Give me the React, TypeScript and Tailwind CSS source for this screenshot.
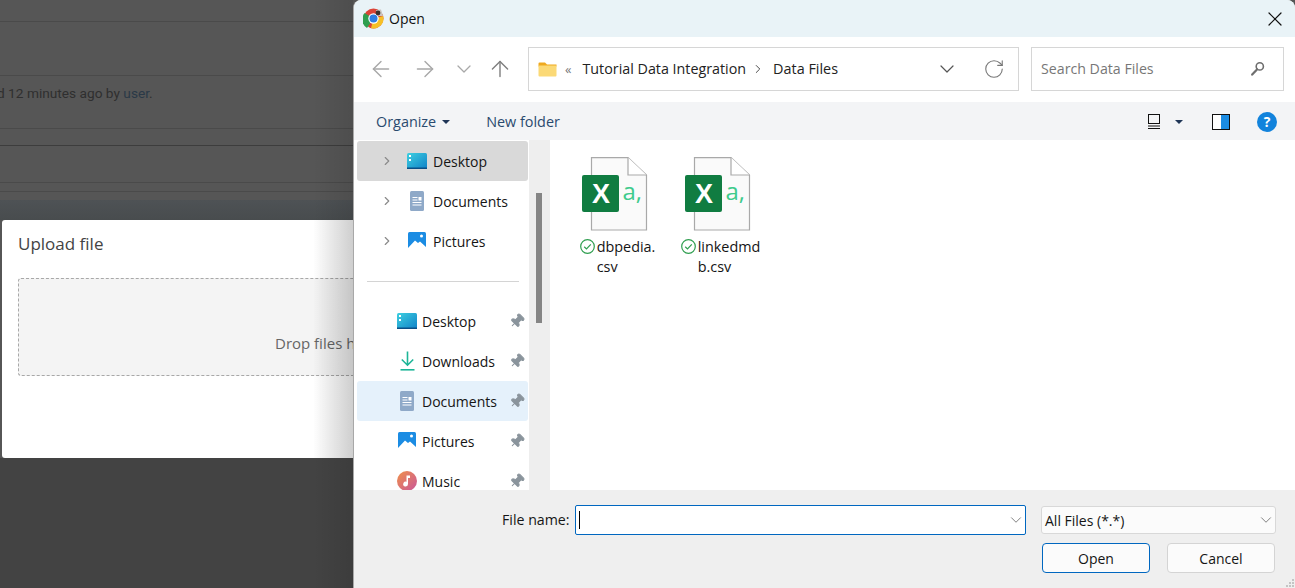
import { ArrowLeft, ArrowRight, ArrowUp, ChevronDown, ChevronRight, RotateCw, X, Pin } from 'lucide-react';

const SEGOE = "font-['Open_Sans','Noto_Sans',sans-serif]";

function ChromeIcon() {
  return (
    <svg width="21" height="21" viewBox="0 0 21 21">
      <circle cx="10.5" cy="10.5" r="10" fill="#db4437" />
      <path d="M10.5 10.5 L4 20 A10 10 0 0 1 1.6 5 Z" fill="#2f9e4f" />
      <path d="M10.5 10.5 L20.2 8 A10 10 0 0 1 8 20.2 Z" fill="#f6c026" />
      <circle cx="10.5" cy="10.5" r="5.2" fill="#fff" />
      <circle cx="10.5" cy="10.5" r="4" fill="#2f7de1" />
      <path d="M13 2 L18 1.5 L20 8 L15 8 Z" fill="#c9c4bd" />
      <circle cx="15" cy="5" r="2.4" fill="#3b302b" />
    </svg>
  );
}

function FolderIcon() {
  return (
    <svg width="19" height="16" viewBox="0 0 19 16">
      <path d="M0.5 2.5 A1 1 0 0 1 1.5 1.5 H7 L9 3.5 H18.5 V5.5 H0.5 Z" fill="#efa91f" />
      <rect x="0.5" y="4.5" width="18" height="11" rx="1" fill="#fbd976" />
    </svg>
  );
}

function DesktopIcon() {
  return (
    <svg width="20" height="16" viewBox="0 0 20 16">
      <defs>
        <linearGradient id="desk" x1="0" y1="0" x2="1" y2="1">
          <stop offset="0" stopColor="#3fd0e0" />
          <stop offset="1" stopColor="#0f82c8" />
        </linearGradient>
      </defs>
      <rect x="0" y="0" width="20" height="16" rx="1.5" fill="url(#desk)" />
      <rect x="0" y="14.5" width="20" height="1.5" fill="#0a4f86" />
      <rect x="2" y="2" width="2" height="2" fill="#fff" />
      <rect x="2" y="6" width="2" height="2" fill="#fff" />
    </svg>
  );
}

function DocumentsIcon() {
  return (
    <svg width="14" height="20" viewBox="0 0 14 20">
      <rect x="0" y="0" width="14" height="20" rx="1.5" fill="#8fa9c8" />
      <rect x="2.5" y="6" width="5" height="1" fill="#fff" />
      <rect x="2.5" y="8.5" width="5" height="1" fill="#fff" />
      <rect x="8.5" y="6" width="3" height="3.5" fill="#fff" />
      <rect x="2.5" y="11" width="9" height="1" fill="#fff" />
      <rect x="2.5" y="13.5" width="9" height="1" fill="#fff" />
    </svg>
  );
}

function PicturesIcon() {
  return (
    <svg width="18" height="18" viewBox="0 0 18 18">
      <rect x="0" y="0" width="18" height="18" rx="1.5" fill="#1b8ce3" />
      <path d="M0 16 L7 8.5 L10 11 L12 9.5 L18 15 V18 H0 Z" fill="#fff" />
      <circle cx="13.5" cy="4" r="1.5" fill="#fff" />
    </svg>
  );
}

function DownloadsIcon() {
  return (
    <svg width="15" height="20" viewBox="0 0 15 20" fill="none" stroke="#1db597" strokeWidth="1.6">
      <path d="M7.5 0.5 V14 M1.8 8.5 L7.5 14.2 L13.2 8.5" />
      <path d="M0.5 18.8 H14.5" />
    </svg>
  );
}

function MusicIcon() {
  return (
    <svg width="20" height="20" viewBox="0 0 20 20">
      <defs>
        <linearGradient id="mus" x1="0" y1="0" x2="1" y2="1">
          <stop offset="0" stopColor="#f0914a" />
          <stop offset="1" stopColor="#c9569a" />
        </linearGradient>
      </defs>
      <circle cx="10" cy="10" r="10" fill="url(#mus)" />
      <path d="M9.5 4.5 H13 V7 H11 V13 A2.4 2.4 0 1 1 9.5 10.8 Z" fill="#fff" />
    </svg>
  );
}

function SearchGlyph() {
  return (
    <svg width="14" height="16" viewBox="0 0 14 16" fill="none" stroke="#6e6e6e">
      <circle cx="8.8" cy="5.4" r="3.6" strokeWidth="1.6" />
      <path d="M6 8.4 L1.2 13.6" strokeWidth="2.2" strokeLinecap="round" />
    </svg>
  );
}

function PinIcon() {
  return <Pin className="w-4 h-4 rotate-45 text-[#8a949c] fill-[#8a949c]" strokeWidth={1.5} />;
}

function NavRow({ icon, label, selected }: { icon: React.ReactNode; label: string; selected?: boolean }) {
  return (
    <div className={`flex items-center flex-shrink-0 w-[171px] h-10 ml-[3px] rounded-[3px] ${selected ? 'bg-[#d9d9d9]' : ''}`}>
      <ChevronRight className="w-[14px] h-[14px] ml-[23px] text-[#8a8a8a]" strokeWidth={2} />
      <div className="w-5 ml-[13px] flex justify-center">{icon}</div>
      <span className="ml-[6px] text-[14px] text-[#151515]">{label}</span>
    </div>
  );
}

function QuickRow({ icon, label, selected }: { icon: React.ReactNode; label: string; selected?: boolean }) {
  return (
    <div className={`flex items-center flex-shrink-0 w-[171px] h-10 ml-[3px] rounded-[3px] ${selected ? 'bg-[#e5f1fb]' : ''}`}>
      <div className="w-5 ml-[40px] flex justify-center">{icon}</div>
      <span className="ml-[5px] text-[14px] text-[#151515] flex-1">{label}</span>
      <div className="mr-[3px]"><PinIcon /></div>
    </div>
  );
}

function CsvIcon() {
  return (
    <svg width="68" height="76" viewBox="0 0 68 76" className="ml-[16px] flex-shrink-0">
      <path d="M9.5 0.6 H46 L64.5 18 V73 H9.5 Z" fill="#fafafa" stroke="#a9a9a9" strokeWidth="1.2" />
      <path d="M46 0.6 V18 H64.5" fill="#fff" stroke="#a9a9a9" strokeWidth="1.2" />
      <rect x="0" y="18" width="37" height="37" rx="2" fill="#107c41" />
      <text x="19" y="46" textAnchor="middle" fontFamily="Liberation Sans, sans-serif" fontWeight="700" fontSize="27" fill="#fff">X</text>
      <text x="40.5" y="43" fontFamily="Open Sans, sans-serif" fontSize="24" fill="#3ecb8d">a,</text>
    </svg>
  );
}

function CheckBadge() {
  return (
    <svg width="15" height="15" viewBox="0 0 15 15" fill="none" stroke="#2f9e4f" className="flex-shrink-0 mt-[2px]">
      <circle cx="7.5" cy="7.5" r="6.8" strokeWidth="1.2" />
      <path d="M4.2 7.7 L6.5 9.9 L10.8 5.4" strokeWidth="1.2" />
    </svg>
  );
}

function FileItem({ lines }: { lines: string[] }) {
  return (
    <div className="w-[103px] flex flex-col">
      <CsvIcon />
      <div className="flex justify-center mt-[4px] gap-[2px]">
        <CheckBadge />
        <div className="text-[14.4px] leading-5 text-[#151515]">
          {lines.map((l) => <div key={l}>{l}</div>)}
        </div>
      </div>
    </div>
  );
}

function BackgroundPage() {
  return (
    <div className="w-[353px] h-[588px] flex-shrink-0 relative overflow-hidden bg-[#565656] flex flex-col font-['Roboto',sans-serif]">
      <div className="h-[22px] border-b border-[#4a4a4a]" />
      <div className="h-[54px] border-b border-[#4a4a4a]" />
      <div className="h-[53px] pb-[18px] border-b border-[#4a4a4a] flex items-center whitespace-nowrap text-[13.7px] text-[#2f2f2f] -ml-[3px]">
        <span>d 12 minutes ago by <span className="text-[#2a3947]">user</span>.</span>
      </div>
      <div className="h-[17px] border-b border-[#3d3d3d]" />
      <div className="h-[37px] border-b border-[#4a4a4a]" />
      <div className="h-[9px] border-b border-[#4a4a4a]" />
      <div className="h-[8px]" />
      <div className="h-[20px] bg-gradient-to-b from-[#4e5255] to-[#484c4e]" />
      <div className="h-[238px] flex-shrink-0 ml-[2px] bg-white rounded-l-[3px] relative flex flex-col pl-4 font-['Open_Sans',sans-serif]">
        <div className="h-[58px] pb-[10px] flex items-center text-[17px] text-[#444444]">Upload file</div>
        <div className="h-[98px] border border-dashed border-[#a8a8a8] border-r-0 rounded-l-[3px] bg-[#f4f4f4] flex items-end pl-[256px] pb-[21px] text-[15px] text-[#666666] whitespace-nowrap overflow-hidden">
          <span>Drop files here to upload</span>
        </div>
        <div className="absolute inset-y-0 right-0 w-[40px] bg-gradient-to-r from-black/0 to-black/10" />
      </div>
      <div className="flex-1 bg-[#434343]" />
      <div className="absolute inset-y-0 right-0 w-[40px] bg-gradient-to-r from-black/0 to-black/10 pointer-events-none" />
    </div>
  );
}

export default function App() {
  return (
    <div className={`w-[1295px] h-[588px] flex overflow-hidden bg-[#555555] ${SEGOE}`}>
      <BackgroundPage />
      <div className="w-[942px] h-[588px] flex flex-col rounded-t-lg overflow-hidden bg-white border-l border-[#a8a8a8]">
        {/* title bar */}
        <div className="h-[37px] flex-shrink-0 flex items-center bg-[#e9f3f7] pl-[9px] pr-[8px]">
          <ChromeIcon />
          <span className="ml-[5px] text-[14px] text-[#111]">Open</span>
          <X className="ml-auto w-6 h-6 text-[#111]" strokeWidth={1.2} />
        </div>
        {/* nav bar */}
        <div className="h-[65px] pb-px flex-shrink-0 flex items-center bg-white">
          <ArrowLeft className="ml-[14px] w-[26px] h-[26px] text-[#a8a8a8]" strokeWidth={1.3} />
          <ArrowRight className="ml-[18px] w-[26px] h-[26px] text-[#a8a8a8]" strokeWidth={1.3} />
          <ChevronDown className="ml-[14px] w-6 h-6 text-[#a8a8a8]" strokeWidth={1.3} />
          <ArrowUp className="ml-[11px] w-[26px] h-[26px] text-[#7f7f7f]" strokeWidth={1.3} />
          <div className="ml-[15px] w-[491px] h-[44px] border border-[#d6d6d6] flex items-center">
            <div className="ml-[9px]"><FolderIcon /></div>
            <span className="ml-[8px] text-[13px] text-[#777] leading-none">«</span>
            <span className="ml-[11px] text-[14.3px] text-[#222]">Tutorial Data Integration</span>
            <ChevronRight className="ml-[5px] w-[14px] h-[14px] text-[#333]" strokeWidth={1.5} />
            <span className="ml-[8px] text-[14.4px] text-[#222]">Data Files</span>
            <ChevronDown className="ml-auto w-6 h-6 text-[#555]" strokeWidth={1.2} />
            <RotateCw className="ml-[24px] mr-[13px] w-[22px] h-[22px] text-[#777]" strokeWidth={1.2} />
          </div>
          <div className="ml-[12px] w-[253px] h-[44px] border border-[#d6d6d6] flex items-center pl-[9px] pr-[18px]">
            <span className="text-[14.2px] text-[#777]">Search Data Files</span>
            <div className="ml-auto"><SearchGlyph /></div>
          </div>
        </div>
        {/* command bar */}
        <div className="h-[38px] pt-px flex-shrink-0 flex items-center bg-[#f3f4f6] text-[14.4px] text-[#2a4a6e]">
          <span className="ml-[22px]">Organize</span>
          <span className="ml-[6px] border-x-[4px] border-t-[4px] border-x-transparent border-t-[#1f3556]" />
          <span className="ml-[36px]">New folder</span>
          <div className="ml-auto flex items-center">
            <svg width="16" height="18" viewBox="0 0 16 18" fill="none" stroke="#111">
              <rect x="2.5" y="1.5" width="11" height="9" />
              <path d="M2 13 H14 M2 15.5 H14" />
            </svg>
            <span className="ml-[13px] border-x-[4px] border-t-[4px] border-x-transparent border-t-[#1f3556]" />
            <div className="ml-[29px] w-[18px] h-[16px] border border-[#111] bg-gradient-to-r from-white from-50% to-[#1b8ce3] to-50%" />
            <div className="ml-[27px] mr-[18px] w-5 h-5 rounded-full bg-[#1283dc] flex items-center justify-center text-white text-[14px] font-bold leading-none">?</div>
          </div>
        </div>
        {/* body */}
        <div className="h-[350px] flex-shrink-0 flex overflow-hidden">
          <div className="w-[175px] flex-shrink-0 flex flex-col pt-px overflow-hidden">
            <NavRow icon={<DesktopIcon />} label="Desktop" selected />
            <NavRow icon={<DocumentsIcon />} label="Documents" />
            <NavRow icon={<PicturesIcon />} label="Pictures" />
            <div className="mt-5 mb-[19px] ml-[13px] mr-[10px] h-px flex-shrink-0 bg-[#d4d4d4]" />
            <QuickRow icon={<DesktopIcon />} label="Desktop" />
            <QuickRow icon={<DownloadsIcon />} label="Downloads" />
            <QuickRow icon={<DocumentsIcon />} label="Documents" selected />
            <QuickRow icon={<PicturesIcon />} label="Pictures" />
            <QuickRow icon={<MusicIcon />} label="Music" />
          </div>
          <div className="w-[21px] flex-shrink-0 bg-[#eeeeee] pt-[53px] pl-[7px]">
            <div className="w-[6px] h-[130px] bg-[#858585]" />
          </div>
          <div className="flex-1 flex items-start pt-[17px] pl-[16px] bg-white">
            <FileItem lines={['dbpedia.', 'csv']} />
            <FileItem lines={['linkedmd', 'b.csv']} />
          </div>
        </div>
        {/* footer */}
        <div className="flex-1 relative bg-[#efefef] pt-[15px] pl-[148px]">
          <div className="flex items-center">
            <span className="text-[14.2px] text-[#151515] w-[73px] whitespace-nowrap">File name:</span>
            <div className="w-[451px] h-[30px] border border-[#0067c0] rounded-[2px] bg-white flex items-center pl-[3px]">
              <span className="w-px h-[18px] bg-black" />
              <ChevronDown className="ml-auto w-[18px] h-[18px] text-[#666]" strokeWidth={1.1} />
            </div>
            <div className="ml-[15px] w-[235px] h-[28px] border border-[#d8d8d8] rounded-[3px] bg-[#fbfbfb] flex items-center pl-[3px]">
              <span className="text-[14px] text-[#151515]">All Files (*.*)</span>
              <ChevronDown className="ml-auto w-[18px] h-[18px] text-[#666]" strokeWidth={1.1} />
            </div>
          </div>
          <div className="flex mt-[8px] pl-[540px]">
            <div className="w-[108px] h-[30px] border border-[#0067c0] rounded-[4px] bg-[#fbfbfb] flex items-center justify-center text-[14px] text-[#151515]">Open</div>
            <div className="ml-[17px] w-[108px] h-[30px] border border-[#d4d4d4] rounded-[4px] bg-[#fbfbfb] flex items-center justify-center text-[14px] text-[#151515]">Cancel</div>
          </div>
          <div className="absolute right-[1px] bottom-[1px] grid grid-cols-3 gap-px w-[8px] h-[8px]">
            <span /><span /><span className="bg-[#c4c4c4]" />
            <span /><span className="bg-[#c4c4c4]" /><span className="bg-[#c4c4c4]" />
            <span className="bg-[#c4c4c4]" /><span className="bg-[#c4c4c4]" /><span className="bg-[#c4c4c4]" />
          </div>
        </div>
      </div>
    </div>
  );
}
